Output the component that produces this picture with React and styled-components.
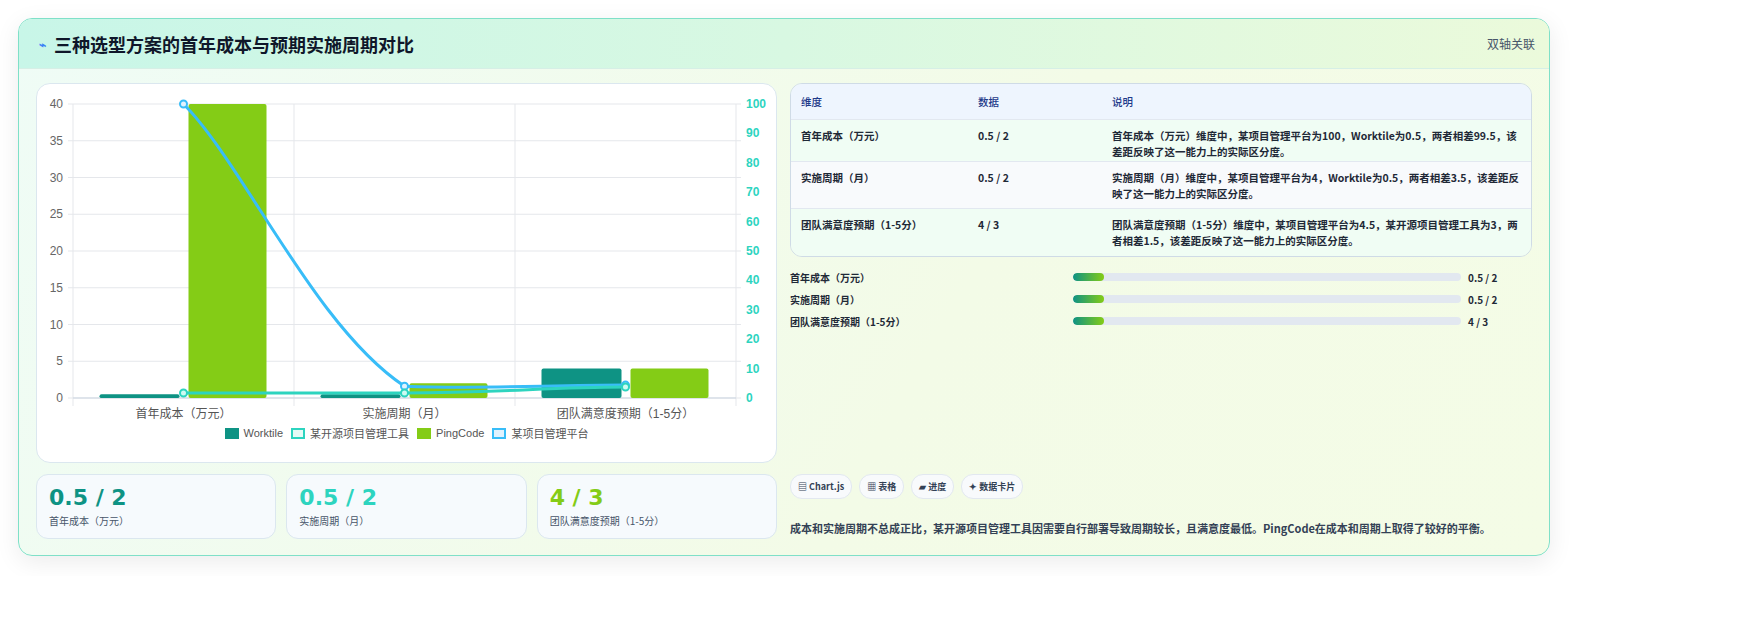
import React from "react";
import styled, { createGlobalStyle } from "styled-components";

const Global = createGlobalStyle`
  body { margin: 0; background: #fff; font-family: "Noto Sans CJK SC", "Noto Sans", sans-serif; }
`;

const Page = styled.div`
  padding: 18px 200px 20px 18px;
  width: 1532px;
`;
const Card = styled.div`
  border: 1px solid #7fe0c8;
  border-radius: 14px;
  background: linear-gradient(120deg, #effcf6 0%, #f3fbe7 60%, #f4fce6 100%);
  box-shadow: 0 6px 24px rgba(0,0,0,0.08);
  overflow: hidden;
`;
const Header = styled.div`
  height: 49px;
  display: flex;
  align-items: center;
  justify-content: space-between;
  padding: 0 14px 0 20px;
  background: linear-gradient(90deg, #c8f6e8 0%, #d8f8e2 50%, #ebfadb 100%);
  border-bottom: 1px solid #d6efe6;
`;
const Title = styled.h1`
  margin: 0;
  font-size: 18px;
  font-weight: 700;
  color: #0f172a;
  display: flex;
  align-items: center;
  gap: 8px;
`;
const Tag = styled.span`
  font-size: 12px;
  color: #475569;
`;
const Body = styled.div`
  display: grid;
  grid-template-columns: 741px 742px;
  gap: 13px;
  padding: 14px 17px 16px 17px;
`;
const Col = styled.div`
  display: flex;
  flex-direction: column;
  gap: 11px;
`;
const ChartCard = styled.div`
  background: #fff;
  border: 1px solid #dbe7ef;
  border-radius: 14px;
  height: 380px;
  box-sizing: border-box;
  display: flex;
  flex-direction: column;
`;
const Legend = styled.div`
  display: flex;
  justify-content: center;
  gap: 8px;
  font-size: 11px;
  color: #555;
  font-family: "Liberation Sans", "Noto Sans CJK SC", sans-serif;
  margin-top: -4px;
`;
const LegItem = styled.span`
  display: flex;
  align-items: center;
  gap: 5px;
`;
const Swatch = styled.span`
  width: 14px;
  height: 11px;
  box-sizing: border-box;
  background: ${p => p.$fill};
  border: ${p => p.$border ? `2px solid ${p.$border}` : "none"};
`;
const Stats = styled.div`
  display: grid;
  grid-template-columns: repeat(3, 1fr);
  gap: 10px;
`;
const Stat = styled.div`
  background: #f6fafd;
  border: 1px solid #dbe7ef;
  border-radius: 12px;
  height: 65px;
  box-sizing: border-box;
  padding: 8px 12px;
`;
const StatNum = styled.div`
  font-size: 22px;
  font-weight: 800;
  color: ${p => p.$c};
  font-family: "DejaVu Sans", sans-serif;
  line-height: 30px;
`;
const StatLbl = styled.div`
  font-size: 10px;
  color: #475569;
`;
const Table = styled.div`
  border: 1px solid #cfdbe6;
  border-radius: 12px;
  overflow: hidden;
  font-size: 10.5px;
  color: #1f2937;
`;
const Row = styled.div`
  display: grid;
  grid-template-columns: 177px 134px 1fr;
  padding: ${p => p.$head ? "0 10px" : "8px 10px"};
  height: ${p => p.$h}px;
  box-sizing: border-box;
  align-items: ${p => p.$head ? "center" : "start"};
  background: ${p => p.$bg};
  border-top: ${p => p.$head ? "none" : "1px solid #e2e8f0"};
  color: ${p => p.$head ? "#1e3a8a" : "#1f2937"};
  font-weight: ${p => p.$head ? 500 : 600};
  line-height: 16px;
`;
const Bars = styled.div`
  display: flex;
  flex-direction: column;
  gap: 6px;
  font-size: 10px;
  font-weight: 600;
  color: #1f2937;
  margin-top: 1px;
`;
const BarRow = styled.div`
  display: grid;
  grid-template-columns: 283px 395px 1fr;
  align-items: center;
  height: 16px;
`;
const Track = styled.div`
  height: 8px;
  border-radius: 4px;
  background: #e2e8f0;
  margin-right: 7px;
  overflow: hidden;
`;
const Fill = styled.div`
  height: 100%;
  border-radius: 4px;
  background: linear-gradient(90deg, #0e9384, #84cc16);
`;
const Chips = styled.div`
  display: flex;
  gap: 7px;
  margin-top: auto;
`;
const Chip = styled.span`
  font-size: 9px;
  font-weight: 700;
  color: #334155;
  background: #f8fafc;
  border: 1px solid #e2e8f0;
  border-radius: 12px;
  padding: 5px 7px;
`;
const Note = styled.p`
  margin: 10px 0 3px;
  font-size: 11px;
  font-weight: 600;
  color: #334155;
`;

const L0 = 36, R0 = 699, T = 20, B = 314;
const yl = v => B - (v / 40) * (B - T);
const yr = v => B - (v / 100) * (B - T);
const cx = i => L0 + 110.5 + i * 221;

function Chart() {
  const grid = [];
  for (let v = 0; v <= 40; v += 5) grid.push(v);
  const bars = [[0.5, 40], [0.5, 2], [4, 4]];
  const blue = [[cx(0), yr(100)], [cx(1), yr(4)], [cx(2), yr(4.4)]];
  const teal = [[cx(0), 309], [cx(1), 309], [cx(2), 303]];
  return (
    <svg width="739" height="345" style={{ display: "block" }} fontFamily="Liberation Sans, Noto Sans CJK SC, sans-serif">
      {grid.map(v => (
        <g key={v}>
          <line x1={L0 - 5} x2={R0 + 5} y1={yl(v)} y2={yl(v)} stroke="#e5e7eb" />
          <text x={L0 - 10} y={yl(v) + 4} fontSize="12" fill="#666" textAnchor="end">{v}</text>
        </g>
      ))}
      {[0,10,20,30,40,50,60,70,80,90,100].map(v => (
        <text key={v} x={R0 + 10} y={yr(v) + 4} fontSize="12" fill="#2dd4bf" fontWeight="600">{v}</text>
      ))}
      {[0,1,2,3].map(i => (
        <line key={i} x1={L0 + i * 221} x2={L0 + i * 221} y1={T} y2={B + 8} stroke="#e5e7eb" />
      ))}
      <line x1={L0} x2={R0} y1={B} y2={B} stroke="#cbd5e1" />
      {bars.map(([w, p], i) => (
        <g key={i}>
          <rect x={cx(i) - 84} y={yl(w)} width="80" height={B - yl(w)} rx="2" fill="#0e9384" />
          <rect x={cx(i) + 5} y={Math.max(yl(p), T)} width="78" height={B - Math.max(yl(p), T)} rx="2" fill="#84cc16" />
        </g>
      ))}
      <path d={`M${blue[0][0]},${blue[0][1]} C${blue[0][0] + 60},${blue[0][1] + 60} ${blue[1][0] - 90},${blue[1][1] - 60} ${blue[1][0]},${blue[1][1]} C${blue[1][0] + 80},${blue[1][1] + 3} ${blue[2][0] - 80},${blue[2][1]} ${blue[2][0]},${blue[2][1]}`} stroke="#38bdf8" strokeWidth="3" fill="none" />
      <path d={`M${teal[0][0]},${teal[0][1]} L${teal[1][0]},${teal[1][1]} C${teal[1][0] + 100},${teal[1][1]} ${teal[2][0] - 80},${teal[2][1]} ${teal[2][0]},${teal[2][1]}`} stroke="#2dd4bf" strokeWidth="3" fill="none" />
      {blue.map(([x, y], i) => <circle key={i} cx={x} cy={y} r="3.5" fill="#e0f2fe" stroke="#38bdf8" strokeWidth="2" />)}
      {teal.map(([x, y], i) => <circle key={i} cx={x} cy={y} r="3.5" fill="#ccfbf1" stroke="#2dd4bf" strokeWidth="2" />)}
      {["首年成本（万元）", "实施周期（月）", "团队满意度预期（1-5分）"].map((t, i) => (
        <text key={t} x={cx(i)} y={334} fontSize="12" fill="#555" textAnchor="middle">{t}</text>
      ))}
    </svg>
  );
}

const rows = [
  ["首年成本（万元）", "0.5 / 2", "首年成本（万元）维度中，某项目管理平台为100，Worktile为0.5，两者相差99.5，该差距反映了这一能力上的实际区分度。", 42, "#f0fdf4"],
  ["实施周期（月）", "0.5 / 2", "实施周期（月）维度中，某项目管理平台为4，Worktile为0.5，两者相差3.5，该差距反映了这一能力上的实际区分度。", 47, "#f8fafc"],
  ["团队满意度预期（1-5分）", "4 / 3", "团队满意度预期（1-5分）维度中，某项目管理平台为4.5，某开源项目管理工具为3，两者相差1.5，该差距反映了这一能力上的实际区分度。", 48, "#f0fdf4"],
];

export default function App() {
  return (
    <Page>
      <Global />
      <Card>
        <Header>
          <Title><span style={{ color: "#3b82f6", fontSize: 12 }}>⌁</span>三种选型方案的首年成本与预期实施周期对比</Title>
          <Tag>双轴关联</Tag>
        </Header>
        <Body>
          <Col>
            <ChartCard>
              <Chart />
              <Legend>
                <LegItem><Swatch $fill="#0e9384" />Worktile</LegItem>
                <LegItem><Swatch $fill="#e6fbf6" $border="#2dd4bf" />某开源项目管理工具</LegItem>
                <LegItem><Swatch $fill="#84cc16" />PingCode</LegItem>
                <LegItem><Swatch $fill="#e0f2fe" $border="#38bdf8" />某项目管理平台</LegItem>
              </Legend>
            </ChartCard>
            <Stats>
              <Stat><StatNum $c="#0e9384">0.5 / 2</StatNum><StatLbl>首年成本（万元）</StatLbl></Stat>
              <Stat><StatNum $c="#2dd4bf">0.5 / 2</StatNum><StatLbl>实施周期（月）</StatLbl></Stat>
              <Stat><StatNum $c="#84cc16">4 / 3</StatNum><StatLbl>团队满意度预期（1-5分）</StatLbl></Stat>
            </Stats>
          </Col>
          <Col>
            <Table>
              <Row $head $h={35} $bg="#eef5fe"><span>维度</span><span>数据</span><span>说明</span></Row>
              {rows.map(r => (
                <Row key={r[0]} $h={r[3]} $bg={r[4]}><span>{r[0]}</span><span>{r[1]}</span><span>{r[2]}</span></Row>
              ))}
            </Table>
            <Bars>
              {rows.map(r => (
                <BarRow key={r[0]}><span>{r[0]}</span><Track><Fill style={{ width: "8%" }} /></Track><span>{r[1]}</span></BarRow>
              ))}
            </Bars>
            <Chips>
              <Chip>▤ Chart.js</Chip>
              <Chip>▦ 表格</Chip>
              <Chip>▰ 进度</Chip>
              <Chip>✦ 数据卡片</Chip>
            </Chips>
            <Note>成本和实施周期不总成正比，某开源项目管理工具因需要自行部署导致周期较长，且满意度最低。PingCode在成本和周期上取得了较好的平衡。</Note>
          </Col>
        </Body>
      </Card>
    </Page>
  );
}
